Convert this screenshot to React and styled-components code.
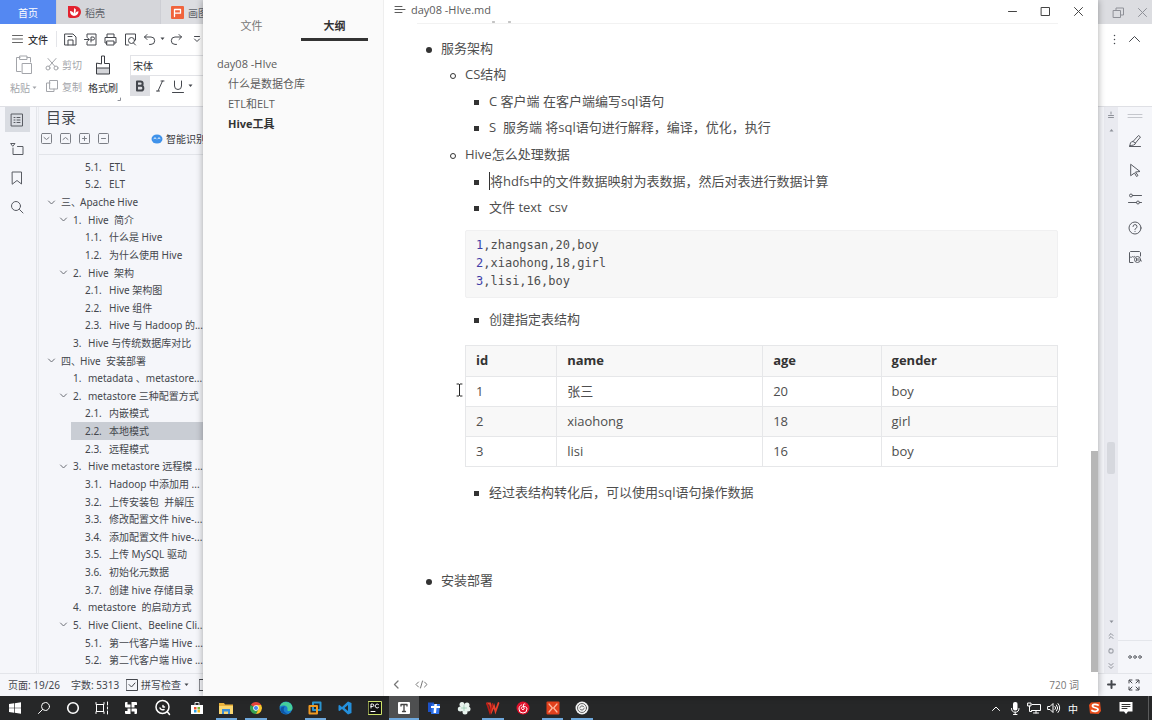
import React from "react";
import styled, { createGlobalStyle, css } from "styled-components";

const UI = `"Noto Sans", "Noto Sans CJK SC", sans-serif`;
const DOC = `"Open Sans", "Noto Sans CJK SC", sans-serif`;
const MONO = `"DejaVu Sans Mono", "Liberation Mono", monospace`;

const Global = createGlobalStyle`
  *, *::before, *::after { box-sizing: border-box; }
  body { margin: 0; overflow: hidden; font-family: ${UI}; font-size: 10px; color: #44474d; }
  button, select { font: inherit; color: inherit; background: none; border: 0; padding: 0; margin: 0; }
  a { color: inherit; text-decoration: none; }
  svg { display: block; flex: none; }
  ul { margin: 0; padding: 0; }
`;

const Desktop = styled.div`
  display: flex;
  flex-direction: column;
  height: 100vh;
`;
const Stage = styled.main`
  position: relative;
  flex: 1;
  min-height: 0;
  display: flex;
`;

/* generic line icon */
const Svg = styled.svg`
  fill: none;
  stroke: currentColor;
  stroke-width: ${(p) => p.$w || 1};
  stroke-linecap: round;
  stroke-linejoin: round;
`;
const Ico = ({ w = 16, h, sw, vb, children }) => (
  <Svg width={w} height={h || w} viewBox={vb || `0 0 ${w} ${h || w}`} $w={sw} aria-hidden="true">
    {children}
  </Svg>
);
const Tri = () => (
  <Ico w={5} h={4}>
    <path d="M.5 .5h4L2.5 3z" fill="currentColor" stroke="none" />
  </Ico>
);
const TriUp = () => (
  <Ico w={5} h={4}>
    <path d="M.5 3.5h4L2.5 1z" fill="currentColor" stroke="none" />
  </Ico>
);

/* ---------- word processor window ---------- */
const Wps = styled.section`
  flex: 1;
  min-width: 0;
  display: flex;
  flex-direction: column;
  background: #f5f6fa;
`;
const TabStrip = styled.div`
  display: flex;
  height: 24px;
  background: #dcdde1;
`;
const DocTab = styled.button`
  display: flex;
  align-items: center;
  justify-content: ${(p) => (p.$home ? "center" : "flex-start")};
  gap: 4px;
  width: ${(p) => (p.$home ? 57 : 104)}px;
  padding-left: ${(p) => (p.$home ? 0 : 10)}px;
  color: ${(p) => (p.$home ? "#fff" : "#5d6068")};
  background: ${(p) => (p.$home ? "#5488f2" : p.$dim ? "#d5d6da" : "#dcdde1")};
  border-right: 1px solid #cdced4;
`;
const WinButtons = styled.div`
  display: flex;
  align-items: center;
  gap: 12px;
  margin-left: auto;
  padding-right: 4px;
  color: #8f9198;
`;
const Ribbon = styled.div`
  display: flex;
  flex-direction: column;
  height: 83px;
  background: #fff;
  border-bottom: 1px solid #dfe0e5;
`;
const QuickBar = styled.div`
  display: flex;
  align-items: center;
  gap: 6px;
  height: 30px;
  padding: 0 11px;
`;
const FileMenu = styled.button`
  display: flex;
  align-items: center;
  gap: 4px;
  width: 46px;
  height: 16px;
  border-right: 1px solid #e4e5e9;
  font-weight: 500;
  color: #303238;
`;
const QuickButtons = styled.div`
  display: flex;
  align-items: center;
  gap: 5px;
`;
const IconButton = styled.button`
  display: flex;
  align-items: center;
  justify-content: center;
  gap: 4px;
`;
const Far = styled.div`
  display: flex;
  align-items: center;
  gap: 12px;
  margin-left: auto;
`;
const Tools = styled.div`
  display: flex;
  height: 42px;
  padding-left: 10px;
`;
const BigTool = styled.button`
  display: flex;
  flex-direction: column;
  align-items: center;
  justify-content: space-between;
  width: ${(p) => p.$w}px;
  line-height: 16px;
  color: ${(p) => (p.$off ? "#a3a5aa" : "#3a3c42")};
`;
const BigLabel = styled.span`
  display: flex;
  align-items: center;
  gap: 2px;
`;
const ToolPair = styled.div`
  display: flex;
  flex-direction: column;
  justify-content: space-between;
  width: 39px;
  margin: 0 4px 0 8px;
`;
const SmallTool = styled.button`
  display: flex;
  align-items: center;
  gap: 3px;
  height: 20px;
  color: #a3a5aa;
  white-space: nowrap;
`;
const FontGroup = styled.div`
  display: flex;
  flex-direction: column;
  justify-content: space-between;
  width: 150px;
  padding: 1px 0 0 12px;
`;
const FontSelect = styled.select`
  appearance: none;
  height: 21px;
  padding: 0 2px;
  border: 1px solid #e2e3e7;
  background: #fff;
  color: #303238;
`;
const FormatRow = styled.div`
  display: flex;
  align-items: center;
  height: 20px;
`;
const Format = styled.button`
  display: flex;
  align-items: center;
  justify-content: center;
  gap: 4px;
  width: ${(p) => p.$w || 20}px;
  height: 20px;
  background: ${(p) => (p.$on ? "#dddee2" : "none")};
`;
const Launcher = styled.div`
  padding-left: 116px;
  color: #8e9199;
`;
const Work = styled.div`
  display: flex;
  flex: 1;
  min-height: 0;
`;
const LeftRail = styled.nav`
  display: flex;
  flex-direction: column;
  align-items: center;
  gap: 4px;
  width: 37px;
  padding-right: 2px;
  border-right: 1px solid #e3e5ea;
`;
const RailButton = styled.button`
  display: flex;
  align-items: center;
  justify-content: center;
  width: 25px;
  height: 25px;
  color: #595c63;
  background: ${(p) => (p.$on ? "#d9dce2" : "none")};
`;
const Toc = styled.aside`
  display: flex;
  flex-direction: column;
  width: 200px;
  margin-left: 1px;
  border-left: 1px solid #e9ebef;
`;
const TocTitle = styled.h2`
  margin: 0;
  padding: 0 7px;
  height: 22px;
  font-size: 15px;
  line-height: 21px;
  font-weight: 400;
`;
const TocTools = styled.div`
  display: flex;
  align-items: center;
  gap: 8px;
  height: 26px;
  padding: 0 0 6px 2px;
  border-bottom: 1px solid #e2e4e9;
  color: #7c7f86;
`;
const Smart = styled.button`
  display: flex;
  align-items: center;
  gap: 3px;
  margin-left: 34px;
  color: #3a3c42;
  white-space: nowrap;
`;
const TocList = styled.nav`
  display: grid;
  grid-auto-rows: 1fr;
  flex: 1;
  min-height: 0;
  padding: 3px 0 4px;
`;
const TocRow = styled.a`
  display: flex;
  align-items: center;
  margin-left: ${(p) => 8 + p.$level * 12}px;
  line-height: 16px;
  white-space: pre;
  background: ${(p) => (p.$on ? "#c9cdd4" : "none")};
`;
const Twist = styled.span`
  display: flex;
  flex: none;
  width: 14px;
  color: #6b6e75;
`;
const Num = styled.span`
  flex: none;
  width: ${(p) => [19, 15, 24][p.$level]}px;
`;
const Page = styled.div`
  flex: 1;
`;
const ScrollRail = styled.div`
  display: flex;
  flex-direction: column;
  align-items: center;
  justify-content: space-between;
  width: 14px;
  padding: 4px 0;
  background: #e9eaf0;
  color: #8e9199;
`;
const ScrollCaps = styled.div`
  display: flex;
  flex-direction: column;
  align-items: center;
  gap: 9px;
`;
const Thumb = styled.div`
  width: 8px;
  height: 32px;
  margin-top: 164px;
  border-radius: 2px;
  background: #d6d8de;
`;
const RightRail = styled.nav`
  display: flex;
  flex-direction: column;
  align-items: center;
  gap: 4px;
  width: 34px;
  padding: 7px 0 4px;
`;
const Grip = styled.div`
  padding-bottom: 6px;
`;
const MoreSlot = styled.div`
  display: flex;
  justify-content: center;
  width: 100%;
  margin-top: auto;
  padding-top: 3px;
  border-top: 1px solid #e4e6eb;
`;
const StatusBar = styled.footer`
  display: flex;
  align-items: center;
  height: 23px;
  padding: 0 12px 1px 8px;
  border-top: 1px solid #e3e5ea;
`;
const StatusItem = styled.span`
  display: flex;
  align-items: center;
  gap: 3px;
  width: ${(p) => p.$w}px;
  white-space: nowrap;
`;

/* ---------- markdown editor window ---------- */
const Editor = styled.section`
  position: absolute;
  top: 0;
  bottom: 0;
  left: 203px;
  right: 54px;
  display: flex;
  background: #fff;
  font-family: ${DOC};
  box-shadow: 0 0 7px rgba(0, 0, 0, 0.35);
`;
const Outline = styled.aside`
  width: 181px;
  padding: 14px;
  background: #fafafa;
  border-right: 1px solid #eeeeee;
  font-size: 11px;
  color: #5c5c5c;
`;
const OutlineTabs = styled.div`
  display: flex;
  gap: 16px;
  padding-left: 1px;
`;
const OutlineTab = styled.button`
  width: 67px;
  height: 27px;
  padding-bottom: 3px;
  border-bottom: 3px solid ${(p) => (p.$on ? "#333" : "transparent")};
  color: ${(p) => (p.$on ? "#333" : "#777")};
  font-weight: ${(p) => (p.$on ? 700 : 400)};
`;
const OutlineList = styled.nav`
  display: flex;
  flex-direction: column;
  margin-top: 13px;
`;
const OutlineLink = styled.a`
  padding-left: ${(p) => (p.$top ? 0 : 11)}px;
  line-height: 20px;
  font-weight: ${(p) => (p.$bold ? 700 : 400)};
  color: ${(p) => (p.$bold ? "#333" : "#5c5c5c")};
`;
const Main = styled.div`
  display: flex;
  flex-direction: column;
  flex: 1;
  min-width: 0;
`;
const TitleBar = styled.header`
  display: flex;
  align-items: center;
  gap: 5px;
  height: 21px;
  padding: 0 14px 3px 10px;
  font-size: 11px;
  color: #5c5c5c;
`;
const TitleButtons = styled.div`
  display: flex;
  align-items: center;
  gap: 22px;
  margin-left: auto;
  padding-top: 4px;
  color: #444;
`;
const Pane = styled.div`
  display: flex;
  flex: 1;
  min-height: 0;
`;
const Article = styled.article`
  flex: 1;
  min-width: 0;
  padding: 0 33px;
  font-size: 13px;
  line-height: 26px;
  color: #4e4e4e;
`;
const Edge = styled.div`
  height: 3px;
  padding-left: 74px;
  border-bottom: 1px solid #f2f2f2;
  color: #888;
`;
const bullet = [
  css`border-radius: 50%; background: #333;`,
  css`border-radius: 50%; border: 1px solid #333;`,
  css`border: solid transparent; border-width: 0 1px 1px 0; background: #333 padding-box;`,
];
const List = styled.ul`
  padding-left: 24px;
  list-style: none;
  ${(p) => p.$depth === 0 && css`padding-top: 11px;`}
  ${(p) => p.$depth === 2 && css`margin: 1px 0;`}
  ${(p) => p.$roomy && css`margin-bottom: 62px;`}
  & > li::before {
    content: "";
    display: inline-block;
    width: 6px;
    height: 6px;
    margin: 0 9px 0 -15px;
    vertical-align: middle;
    ${(p) => bullet[p.$depth]}
  }
`;
const Caret = styled.span`
  border-left: 1px solid #333;
`;
const Code = styled.pre`
  margin: 10px 0 8px;
  padding: 5px 10px;
  border: 1px solid #f0f0f1;
  border-radius: 2px;
  background: #f7f7f7;
  font-family: ${MONO};
  font-size: 12px;
  line-height: 18px;
  height: 68px;
`;
const Key = styled.span`
  color: #3f3fa8;
`;
const TableWrap = styled.div`
  position: relative;
  margin: 13px 0 12px;
`;
const Pointer = styled.span`
  position: absolute;
  left: -10px;
  top: 38px;
  color: #222;
`;
const Table = styled.table`
  width: 100%;
  table-layout: fixed;
  border-collapse: collapse;
  line-height: 18px;
  text-align: left;
  th, td { height: 30px; padding: 0 10px 2px; border: 1px solid #e6e7e9; }
  th { height: 31px; color: #333; }
  thead tr, tbody tr:nth-child(2n) { background: #f8f8f8; }
`;
const PageScroll = styled.div`
  display: flex;
  flex-direction: column;
  justify-content: flex-end;
  width: 7px;
`;
const PageThumb = styled.div`
  height: 34%;
  background: #b7b7b7;
`;
const EditorFoot = styled.footer`
  display: flex;
  align-items: center;
  gap: 14px;
  height: 24px;
  padding: 0 19px 0 8px;
  color: #777;
`;
const Words = styled.span`
  margin-left: auto;
`;

/* ---------- taskbar ---------- */
const Taskbar = styled.nav`
  display: flex;
  height: 24px;
  background: #262728;
  color: #fff;
`;
const Launch = styled.button`
  display: flex;
  align-items: center;
  justify-content: center;
  width: ${(p) => p.$w || 29}px;
`;
const Apps = styled.div`
  display: grid;
  grid-template-columns: repeat(14, 1fr);
  width: 415px;
  margin-left: 1px;
`;
const AppButton = styled.button`
  display: flex;
  align-items: center;
  justify-content: center;
  background: ${(p) => (p.$front ? "#4e4f50" : "none")};
  position: relative;
  &::after {
    content: "";
    position: absolute;
    left: ${(p) => (p.$front ? 0 : 4)}px;
    right: ${(p) => (p.$front ? 0 : 4)}px;
    bottom: 0;
    height: 2px;
    background: ${(p) => (p.$run ? "#6ea8dc" : "none")};
  }
`;
const Tray = styled.div`
  display: flex;
  margin-left: auto;
  padding-right: 3px;
`;
const TrayEnd = styled.span`
  width: 4px;
  border-right: 1px solid #5a5b5c;
`;

const toc = [
  [2, "5.1.", "ETL"],
  [2, "5.2.", "ELT"],
  [0, "三、", "Apache Hive", 1],
  [1, "1.", "Hive  简介", 1],
  [2, "1.1.", "什么是 Hive"],
  [2, "1.2.", "为什么使用 Hive"],
  [1, "2.", "Hive  架构", 1],
  [2, "2.1.", "Hive 架构图"],
  [2, "2.2.", "Hive 组件"],
  [2, "2.3.", "Hive 与 Hadoop 的..."],
  [1, "3.", "Hive 与传统数据库对比"],
  [0, "四、", "Hive  安装部署", 1],
  [1, "1.", "metadata 、metastore..."],
  [1, "2.", "metastore 三种配置方式", 1],
  [2, "2.1.", "内嵌模式"],
  [2, "2.2.", "本地模式", 0, 1],
  [2, "2.3.", "远程模式"],
  [1, "3.", "Hive metastore 远程模 ...", 1],
  [2, "3.1.", "Hadoop 中添加用 ..."],
  [2, "3.2.", "上传安装包  并解压"],
  [2, "3.3.", "修改配置文件 hive-..."],
  [2, "3.4.", "添加配置文件 hive-..."],
  [2, "3.5.", "上传 MySQL 驱动"],
  [2, "3.6.", "初始化元数据"],
  [2, "3.7.", "创建 hive 存储目录"],
  [1, "4.", "metastore  的启动方式"],
  [1, "5.", "Hive Client、Beeline Cli...", 1],
  [2, "5.1.", "第一代客户端 Hive ..."],
  [2, "5.2.", "第二代客户端 Hive ..."],
];

const people = [
  ["1", "张三", "20", "boy"],
  ["2", "xiaohong", "18", "girl"],
  ["3", "lisi", "16", "boy"],
];

const boxed = ["M3 4.5l2.5 2 2.5-2", "M3 6.5l2.5-2 2.5 2", "M3.500 5.5h4M5.5 3.500v4", "M3.500 5.5h4"];

function WpsWindow() {
  return (
    <Wps>
      <TabStrip>
        <DocTab $home>首页</DocTab>
        <DocTab $dim>
          <Ico w={14}>
            <g stroke="none">
              <path d="M1 1h7a6 6 0 0 1 0 12H3a2 2 0 0 1-2-2z" fill="#e3222e" />
              <path d="M7 11C4 10.500 3 8.500 3 6c2 0 3.200 1 3.700 2.500L7.200 3l1.700 1.600-.7 3.900C9 7 10 6.300 11.500 6.200 11.300 9 10 10.700 7 11z" fill="#fff" />
            </g>
          </Ico>
          稻壳
        </DocTab>
        <DocTab>
          <Ico w={13}>
            <rect width="13" height="13" rx="1" fill="#f0633c" stroke="none" />
            <path d="M3.500 10.500v-7h6v3.700h-6" stroke="#fff" strokeWidth="1.300" />
          </Ico>
          画图
        </DocTab>
        <WinButtons>
          <IconButton aria-label="还原">
            <Ico w={13}>
              <path d="M1.500 4.500h7v7h-7zM4 4.500V2h7.500v7H8.500" />
            </Ico>
          </IconButton>
          <IconButton aria-label="关闭">
            <Ico w={11}>
              <path d="M1.500 1.500l8 8M9.500 1.500l-8 8" />
            </Ico>
          </IconButton>
        </WinButtons>
      </TabStrip>

      <Ribbon>
        <QuickBar>
          <FileMenu>
            <Ico w={13} h={10}>
              <path d="M1.500 1.500h10M1.500 5h10M1.500 8.500h10" stroke="#666" />
            </Ico>
            文件
          </FileMenu>
          <QuickButtons>
            <IconButton aria-label="保存">
              <Ico w={15}>
                <path d="M2 2h8l3 3v8H2zM5 13V8h5v5M5 4.500h4" />
              </Ico>
            </IconButton>
            <IconButton aria-label="导出">
              <Ico w={15}>
                <path d="M4 5V2h9v11H4v-3M1.500 7.500H6M4.500 5.800L6.300 7.500 4.500 9.200M8 10V5h2a1.500 1.500 0 0 1 0 3H8" />
              </Ico>
            </IconButton>
            <IconButton aria-label="打印">
              <Ico w={15}>
                <path d="M4 5.500V2h7v3.500M4 11H2V5.500h11V11h-2M4 9h7v4H4z" />
              </Ico>
            </IconButton>
            <IconButton aria-label="打印预览">
              <Ico w={15}>
                <path d="M5.500 13H2.500V2h10v6M10.500 11L12.500 13" />
                <circle cx="8.500" cy="8.500" r="3" />
              </Ico>
            </IconButton>
            <IconButton aria-label="撤销">
              <Ico w={13}>
                <path d="M4 1.500L1.500 4 4 6.500M1.500 4h6.500a3.700 3.700 0 0 1 0 7.400H6.500" />
              </Ico>
              <Tri />
            </IconButton>
            <IconButton aria-label="重做">
              <Ico w={13}>
                <path d="M9 1.500L11.500 4 9 6.500M11.500 4H5a3.700 3.700 0 0 0 0 7.400h1.500" />
              </Ico>
            </IconButton>
            <IconButton aria-label="更多">
              <Ico w={14} h={8}>
                <path d="M6.500 1.500h5M6.500 4l2.500 2.500L11.500 4" />
              </Ico>
            </IconButton>
          </QuickButtons>
          <Far>
            <IconButton aria-label="选项">
              <Ico w={3} h={11}>
                <path d="M1.500 1.500v.1M1.500 5.500v.1M1.500 9.500v.1" strokeWidth="1.500" />
              </Ico>
            </IconButton>
            <IconButton aria-label="收起功能区">
              <Ico w={13} h={8}>
                <path d="M1.500 6.500l5-5 5 5" />
              </Ico>
            </IconButton>
          </Far>
        </QuickBar>
        <Tools>
          <BigTool $w={27} $off>
            <Ico w={20} h={22}>
              <path d="M7 17.500H2.500v-14H6M13 3.500h3.500V8M6 2h7v3.500H6zM8.500 9.500h9v10h-9z" />
            </Ico>
            <BigLabel>
              粘贴 <Tri />
            </BigLabel>
          </BigTool>
          <ToolPair>
            <SmallTool>
              <Ico w={14}>
                <circle cx="3" cy="11" r="2" />
                <circle cx="11" cy="11" r="2" />
                <path d="M4 9.500L11 1.500M10 9.500L3 1.500" />
              </Ico>
              剪切
            </SmallTool>
            <SmallTool>
              <Ico w={14}>
                <path d="M5 1.500h7.500V10H5zM5 4H1.500v8.500H9V10" />
              </Ico>
              复制
            </SmallTool>
          </ToolPair>
          <BigTool $w={30}>
            <Ico w={20} h={22}>
              <path d="M3.500 14h13v6h-13z" fill="#d4d5d9" stroke="none" />
              <path d="M8.500 9.500V2h3v7.500h5v10.500h-13V9.500zM3.500 14h13" />
            </Ico>
            <BigLabel>格式刷</BigLabel>
          </BigTool>
          <FontGroup>
            <FontSelect aria-label="字体" defaultValue="宋体">
              <option>宋体</option>
            </FontSelect>
            <FormatRow>
              <Format $on aria-label="加粗">
                <Ico w={12} sw={2}>
                  <path d="M3 1.500h3.500a2 2 0 0 1 0 4.300H3zM3 5.800h4a2.300 2.300 0 0 1 0 4.700H3z" />
                </Ico>
              </Format>
              <Format aria-label="倾斜">
                <Ico w={12}>
                  <path d="M7 1h3M2.500 11h3M8.500 1L4 11" />
                </Ico>
              </Format>
              <Format $w={24} aria-label="下划线">
                <Ico w={12} h={13}>
                  <path d="M2.500 1v5a3.500 3.500 0 0 0 7 0V1M.5 12.500h11" />
                </Ico>
                <Tri />
              </Format>
            </FormatRow>
          </FontGroup>
        </Tools>
        <Launcher>
          <Ico w={6}>
            <path d="M4.500 2v2.500H2" />
          </Ico>
        </Launcher>
      </Ribbon>

      <Work>
        <LeftRail>
          <RailButton $on aria-label="目录">
            <Ico w={14}>
              <rect x="1.500" y="1" width="11" height="12" />
              <path d="M4 4.500h1M7 4.500h3M4 7h1M7 7h3M4 9.500h1M7 9.500h3" />
            </Ico>
          </RailButton>
          <RailButton aria-label="章节">
            <Ico w={14}>
              <path d="M1 1.500h4L3 4zM3 6v6.500h10v-8H7.500" />
            </Ico>
          </RailButton>
          <RailButton aria-label="书签">
            <Ico w={12} h={14}>
              <path d="M1.500 1h9v12L6 9.500 1.500 13z" />
            </Ico>
          </RailButton>
          <RailButton aria-label="查找">
            <Ico w={14}>
              <circle cx="6" cy="6" r="4.500" />
              <path d="M9.500 9.500L13 13" />
            </Ico>
          </RailButton>
        </LeftRail>
        <Toc>
          <TocTitle>目录</TocTitle>
          <TocTools>
            {boxed.map((d) => (
              <IconButton key={d} aria-label="目录层级">
                <Ico w={11}>
                  <rect x=".5" y=".5" width="10" height="10" rx="1" />
                  <path d={d} />
                </Ico>
              </IconButton>
            ))}
            <Smart>
              <Ico w={12} h={10}>
                <ellipse cx="6" cy="5" rx="5.500" ry="4.500" fill="#3f92ea" stroke="none" />
                <path d="M3 4.500l1-.7 1 .7M7 4.500l1-.7 1 .7" stroke="#fff" />
              </Ico>
              智能识别
            </Smart>
          </TocTools>
          <TocList>
            {toc.map(([level, num, text, open, on]) => (
              <TocRow key={num + text} href="#" $level={level} $on={on}>
                <Twist>
                  {open ? (
                    <Ico w={9} h={7}>
                      <path d="M1.500 2l3 3 3-3" />
                    </Ico>
                  ) : null}
                </Twist>
                <Num $level={level}>{num}</Num>
                {text}
              </TocRow>
            ))}
          </TocList>
        </Toc>
        <Page />
        <ScrollRail>
          <ScrollCaps>
            <Ico w={8} h={8}>
              <path d="M4 1v2M1.500 4.500h5M1.500 6.500h5" />
            </Ico>
            <TriUp />
          </ScrollCaps>
          <Thumb />
          <ScrollCaps>
            <Tri />
            <Ico w={6}>
              <path d="M1 2.500l2-2 2 2M1 5.500l2-2 2 2" />
            </Ico>
            <Ico w={6}>
              <rect x="1" y="1" width="4" height="4" rx="1" />
            </Ico>
            <Ico w={6}>
              <path d="M1 .5l2 2 2-2M1 3.500l2 2 2-2" />
            </Ico>
          </ScrollCaps>
        </ScrollRail>
        <RightRail>
          <Grip>
            <Ico w={16} h={4}>
              <path d="M1 .5h14M1 3.500h14" stroke="#c5c7cd" />
            </Ico>
          </Grip>
          <RailButton aria-label="编辑">
            <Ico w={14}>
              <path d="M1.500 12.500h11M2 11.500c0-2 .5-4 3-4l5.500-6 2 1.500-5 6c0 2-3 2.500-5.500 2.500zM5 7.500L7.500 9" />
            </Ico>
          </RailButton>
          <RailButton aria-label="选择">
            <Ico w={14}>
              <path d="M3 1.500l9 7-4.500.5 2.500 3.500-1.500 1L6.500 10 3 12.500z" />
            </Ico>
          </RailButton>
          <RailButton aria-label="设置">
            <Ico w={14}>
              <circle cx="3" cy="3.500" r="1.500" />
              <circle cx="10" cy="10.500" r="1.500" />
              <path d="M4.500 3.500h9M.5 10.500h8M11.500 10.500h2" />
            </Ico>
          </RailButton>
          <RailButton aria-label="帮助">
            <Ico w={14}>
              <circle cx="7" cy="7" r="6" />
              <path d="M5 5.500a2 2 0 1 1 2.500 2c-.5.300-.5.500-.5 1M7 10.300v.2" />
            </Ico>
          </RailButton>
          <RailButton aria-label="图片">
            <Ico w={14}>
              <path d="M5 12.500H1.500v-10l1-1h9l1 1V6M1.500 6.500c2 2 3 0 3 0s.5 1.500 2 0" />
              <circle cx="9.500" cy="9.500" r="3" />
              <path d="M8.500 8.500v2M10 8.500v2M12 10l1.500 1" />
            </Ico>
          </RailButton>
          <MoreSlot>
            <RailButton aria-label="更多工具">
              <Ico w={14} h={4}>
                <circle cx="2" cy="2" r="1.300" />
                <circle cx="7" cy="2" r="1.300" />
                <circle cx="12" cy="2" r="1.300" />
              </Ico>
            </RailButton>
          </MoreSlot>
        </RightRail>
      </Work>

      <StatusBar>
        <StatusItem $w={63}>页面: 19/26</StatusItem>
        <StatusItem $w={55}>字数: 5313</StatusItem>
        <StatusItem $w={73}>
          <Ico w={12}>
            <path d="M.5 .5h11v11H.5zM3 5.500L5.500 8 9 4" />
          </Ico>
          拼写检查 <Tri />
        </StatusItem>
        <Ico w={12}>
          <path d="M.5 .5h11v11H.5z" />
        </Ico>
        <Far>
          <IconButton aria-label="放大">
            <Ico w={9} sw={2}>
              <path d="M4.500 1v7M1 4.500h7" />
            </Ico>
          </IconButton>
          <IconButton aria-label="全屏">
            <Ico w={12}>
              <path d="M1 4V1h3M8 1h3v3M11 8v3H8M4 11H1V8M1.500 1.500L4 4M10.500 1.500L8 4M10.500 10.500L8 8M1.500 10.500L4 8" />
            </Ico>
          </IconButton>
        </Far>
      </StatusBar>
    </Wps>
  );
}

function EditorWindow() {
  return (
    <Editor>
      <Outline>
        <OutlineTabs>
          <OutlineTab>文件</OutlineTab>
          <OutlineTab $on>大纲</OutlineTab>
        </OutlineTabs>
        <OutlineList>
          <OutlineLink href="#" $top>day08 -HIve</OutlineLink>
          <OutlineLink href="#">什么是数据仓库</OutlineLink>
          <OutlineLink href="#">ETL和ELT</OutlineLink>
          <OutlineLink href="#" $bold>Hive工具</OutlineLink>
        </OutlineList>
      </Outline>
      <Main>
        <TitleBar>
          <Ico w={12} h={9}>
            <path d="M1 1.500h7M1 4.500h10M1 7.500h7" />
          </Ico>
          day08 -HIve.md
          <TitleButtons>
            <IconButton aria-label="最小化">
              <Ico w={11}>
                <path d="M1.500 5.500h8" />
              </Ico>
            </IconButton>
            <IconButton aria-label="最大化">
              <Ico w={11}>
                <path d="M1.500 1.500h8v8h-8z" />
              </Ico>
            </IconButton>
            <IconButton aria-label="关闭">
              <Ico w={11}>
                <path d="M1.500 1.500l8 8M9.500 1.500l-8 8" />
              </Ico>
            </IconButton>
          </TitleButtons>
        </TitleBar>
        <Pane>
          <Article>
            <Edge>
              <Ico w={22} h={2}>
                <path d="M1.500 1h2M17.500 1h2" />
              </Ico>
            </Edge>
            <List $depth={0}>
              <li>
                服务架构
                <List $depth={1} $roomy>
                  <li>
                    CS结构
                    <List $depth={2}>
                      <li>C 客户端 在客户端编写sql语句</li>
                      <li>S&nbsp; 服务端 将sql语句进行解释，编译，优化，执行</li>
                    </List>
                  </li>
                  <li>
                    Hive怎么处理数据
                    <List $depth={2}>
                      <li>
                        <Caret />
                        将hdfs中的文件数据映射为表数据，然后对表进行数据计算
                      </li>
                      <li>文件 text&nbsp; csv</li>
                    </List>
                    <Code>
                      <Key>1</Key>,zhangsan,20,boy{"\n"}
                      <Key>2</Key>,xiaohong,18,girl{"\n"}
                      <Key>3</Key>,lisi,16,boy
                    </Code>
                    <List $depth={2}>
                      <li>创建指定表结构</li>
                    </List>
                    <TableWrap>
                      <Pointer>
                        <Ico w={9} h={14}>
                          <path d="M2 1h2l.5.500L5 1h2M4.500 1.500v11M2 13h2l.5-.5.5.5h2" />
                        </Ico>
                      </Pointer>
                      <Table>
                        <colgroup>
                          <col style={{ width: "15.4%" }} />
                          <col style={{ width: "34.8%" }} />
                          <col style={{ width: "20%" }} />
                          <col />
                        </colgroup>
                        <thead>
                          <tr>
                            <th>id</th>
                            <th>name</th>
                            <th>age</th>
                            <th>gender</th>
                          </tr>
                        </thead>
                        <tbody>
                          {people.map((row) => (
                            <tr key={row[0]}>
                              {row.map((cell) => (
                                <td key={cell}>{cell}</td>
                              ))}
                            </tr>
                          ))}
                        </tbody>
                      </Table>
                    </TableWrap>
                    <List $depth={2}>
                      <li>经过表结构转化后，可以使用sql语句操作数据</li>
                    </List>
                  </li>
                </List>
              </li>
              <li>安装部署</li>
            </List>
          </Article>
          <PageScroll>
            <PageThumb />
          </PageScroll>
        </Pane>
        <EditorFoot>
          <IconButton aria-label="隐藏侧栏">
            <Ico w={9} sw={1.3}>
              <path d="M6 1L2.500 4.500 6 8" />
            </Ico>
          </IconButton>
          <IconButton aria-label="源代码模式">
            <Ico w={13} h={9}>
              <path d="M3.500 2L1 4.500 3.500 7M9.500 2L12 4.500 9.500 7M7.500 1l-2 7" />
            </Ico>
          </IconButton>
          <Words>720 词</Words>
        </EditorFoot>
      </Main>
    </Editor>
  );
}

const apps = [
  ["应用商店", 0, (
    <>
      <path d="M1 4h12v9H1z" fill="#fff" stroke="none" />
      <path d="M5 4V1.500h4V4" stroke="#ddd" />
      <path d="M4 6h2.500v2.500H4z" fill="#e8502e" stroke="none" />
      <path d="M7.500 6H10v2.500H7.500z" fill="#7cb82f" stroke="none" />
      <path d="M4 9h2.500v2.500H4z" fill="#2ba0e5" stroke="none" />
      <path d="M7.500 9H10v2.500H7.500z" fill="#f5b81c" stroke="none" />
    </>
  )],
  ["资源管理器", 1, (
    <g stroke="none">
      <path d="M0 2h5l1 1.500h8V12H0z" fill="#e9b23c" />
      <path d="M0 5h14v8H0z" fill="#fbd771" />
      <path d="M3 8h8v5H9v-2.500H5V13H3z" fill="#3f8fd6" />
    </g>
  )],
  ["浏览器", 1, (
    <g stroke="none">
      <path d="M7 7L1.800 4a6 6 0 0 1 10.400 0z" fill="#e5443a" />
      <path d="M7 7h-1L1.800 4A6 6 0 0 0 7 13l2-4z" fill="#36a352" />
      <path d="M7 4h5.200A6 6 0 0 1 7 13l2.500-5z" fill="#f8c62c" />
      <circle cx="7" cy="7" r="2.800" fill="#fff" />
      <circle cx="7" cy="7" r="2.100" fill="#4a87ee" />
    </g>
  )],
  ["Edge", 0, (
    <g stroke="none">
      <circle cx="7" cy="7" r="6.500" fill="#1b7fd0" />
      <path d="M.7 6A6.500 6.500 0 0 1 13.500 7c0 2-1.500 3-3.500 3-1.500 0-2-.7-1.500-1.500C9 6 7 4.500 4.500 4.500 3 4.500 1.500 5 .7 6z" fill="#45cf9a" />
      <path d="M5 7c-1 2.500.5 5 4 5.500-4 1.500-7.500-1-7.500-4C1.500 6 4 5 6 5.500 5.500 6 5 6.500 5 7z" fill="#0d55a5" />
    </g>
  )],
  ["虚拟机", 1, (
    <g strokeWidth="2">
      <path d="M5 1.500h7.500V9H5z" stroke="#2b95cf" />
      <path d="M1.500 5H9v7.500H1.500z" stroke="#f09a22" />
    </g>
  )],
  ["代码编辑器", 0, (
    <g stroke="none">
      <path d="M10 .5L13.500 2v10L10 13.500 4 8 1.500 10 .5 9.500v-5L1.500 4 4 6zM10 4L6.500 7 10 10z" fill="#2490dc" fillRule="evenodd" />
    </g>
  )],
  ["PyCharm", 0, (
    <>
      <rect x=".5" y=".5" width="13" height="13" fill="#111" stroke="#cfe36a" />
      <path d="M3 7V3h1.500a1.200 1.200 0 0 1 0 2.500H3M10.500 3.500a2 2 0 1 0 0 3M3 10.500h4" stroke="#fff" />
    </>
  )],
  ["文档编辑器", 2, (
    <>
      <rect x="1" y="1" width="12" height="12" rx="1" fill="#fff" stroke="none" />
      <path d="M4 5V3.500h6V5M7 3.500v7M5.500 10.500h3" stroke="#444" strokeWidth="1.300" />
    </>
  )],
  ["翻译", 0, (
    <g stroke="none">
      <path d="M1 1.500h6V9L5 11H1z" fill="#1c52c9" />
      <path d="M5 3h8l-1 10H4z" fill="#2f74ee" />
      <path d="M7.500 3h2.500l-.3 2H13v2H9.500L9 12H6.500L7 7H4V5h3.200z" fill="#fff" />
    </g>
  )],
  ["设置工具", 0, (
    <g stroke="none" fill="#e8f3ee">
      <circle cx="5" cy="3.500" r="2.500" />
      <circle cx="10" cy="4" r="2.500" />
      <circle cx="11" cy="8" r="2.500" />
      <circle cx="8" cy="11" r="2.500" />
      <circle cx="3.300" cy="8" r="2.500" />
      <circle cx="7" cy="7" r="3.500" />
      <path d="M7 4.500v5M4.500 7h5" stroke="#7fbfa0" strokeWidth=".6" />
    </g>
  )],
  ["WPS", 1, (
    <g strokeWidth="1.800" strokeLinejoin="miter">
      <path d="M1 2.500h3l1.500 8L8 5l1.500 5.500L12.500 2" stroke="#e8402c" />
      <path d="M1 2.500L4 11.500 6.500 3" stroke="#b91d17" />
    </g>
  )],
  ["音乐", 0, (
    <>
      <circle cx="7" cy="7" r="6.500" fill="#e0112b" stroke="none" />
      <path d="M9 3c-1.500-.5-2 .5-1.500 2l.7 3a1.500 1.500 0 1 1-2.500-1.700C7 5 11 5 11 8a4 4 0 0 1-8 0c0-2 1-3.300 2.500-4" stroke="#fff" />
    </>
  )],
  ["思维导图", 1, (
    <>
      <rect x=".5" y=".5" width="13" height="13" rx="1" fill="#e2401c" stroke="none" />
      <path d="M3 3l3 3.500v1L3 11M11 3L8 6.500v1L11 11M6 7h2" stroke="#ffb9a0" strokeWidth="1.200" />
    </>
  )],
  ["录屏", 1, (
    <>
      <circle cx="7" cy="7" r="6.500" fill="#f3f3f3" stroke="none" />
      <circle cx="7" cy="7" r="4.500" stroke="#444" strokeWidth=".8" />
      <path d="M5 6.500a2.200 2.200 0 0 1 4-.5M9 7.500a2.200 2.200 0 0 1-4 .5" stroke="#444" strokeWidth=".8" />
    </>
  )],
];

function Bar() {
  return (
    <Taskbar>
      <Launch aria-label="开始">
        <Ico w={14}>
          <path d="M1 3l5-.7v4.400H1zM6.700 2.200L13 1.300v5.400H6.700zM1 7.300h5v4.400L1 11zM6.700 7.300H13v5.400l-6.300-.9z" fill="#fff" stroke="none" />
        </Ico>
      </Launch>
      <Launch aria-label="搜索">
        <Ico w={14}>
          <circle cx="8.500" cy="5.500" r="4" />
          <path d="M5.500 8.500L1.500 12.500" />
        </Ico>
      </Launch>
      <Launch aria-label="助手">
        <Ico w={14} sw={1.6}>
          <circle cx="7" cy="7" r="5.300" />
        </Ico>
      </Launch>
      <Launch aria-label="任务视图">
        <Ico w={14}>
          <path d="M1 1.500v2h8v-2M1 12.500v-2h8v2M1.500 4v6M8.500 4v6M12.500 1v3M12.500 6v2M12.500 10v3" />
        </Ico>
      </Launch>
      <Launch aria-label="工具箱">
        <Ico w={14}>
          <g fill="#fff" stroke="none">
            <path d="M1 2a1 1 0 0 1 1-1h1.500v2.500H6.500V6.500H2a1 1 0 0 1-1-1z" />
            <path d="M7.500 1H12a1 1 0 0 1 1 1v2h-2.500v2.500h-3z" />
            <path d="M7.500 7.500H12a1 1 0 0 1 1 1V12a1 1 0 0 1-1 1h-1.500v-2.500h-3z" />
            <path d="M1 10h2.500V7.500h3V13H2a1 1 0 0 1-1-1z" />
          </g>
        </Ico>
      </Launch>
      <Launch $w={36} aria-label="查找文件">
        <Ico w={18} sw={1.5}>
          <circle cx="8.500" cy="8" r="6.500" />
          <path d="M13.500 13L15.500 15.500" />
          <path d="M9 6.500v1.500h1.500M6 9a3 3 0 0 0 4 1.500" />
        </Ico>
      </Launch>
      <Apps>
        {apps.map(([name, state, art]) => (
          <AppButton key={name} aria-label={name} $run={state > 0} $front={state === 2}>
            <Ico w={14}>{art}</Ico>
          </AppButton>
        ))}
      </Apps>
      <Tray>
        <Launch $w={20} aria-label="隐藏的图标">
          <Ico w={10} h={7}>
            <path d="M1.500 5.500L5 2l3.500 3.500" />
          </Ico>
        </Launch>
        <Launch $w={18} aria-label="麦克风">
          <Ico w={10} h={13}>
            <rect x="3" y="0" width="4.500" height="8.500" rx="2" fill="#fff" stroke="none" />
            <path d="M1.500 6.500a3.700 3.700 0 0 0 7.500 0M5.200 10v2M3.500 12.500h3.500" />
          </Ico>
        </Launch>
        <Launch $w={20} aria-label="网络">
          <Ico w={14} h={12}>
            <path d="M5 2.500h8.500v6H4.500M9 8.500v2.500M6.500 11h5M1 1h3v3H1zM2.500 4v5.500h2" />
          </Ico>
        </Launch>
        <Launch $w={19} aria-label="音量">
          <Ico w={14} h={12}>
            <path d="M1 4.500h2l3-3v9l-3-3H1zM8 4.500a2 2 0 0 1 0 3M9.500 3a4.500 4.500 0 0 1 0 6M11 1.500a6.500 6.500 0 0 1 0 9" />
          </Ico>
        </Launch>
        <Launch $w={20}>中</Launch>
        <Launch $w={24} aria-label="输入法">
          <Ico w={14}>
            <path d="M3 1.500l9-.5 1 9-2.500 3L2 12.500 1 4z" fill="#ea4e1c" stroke="none" />
            <path d="M10 4C8 3 4.500 3 4.500 5s5.500 1.500 5.500 3.500S6 11 4 9.500" stroke="#fff" strokeWidth="1.800" />
          </Ico>
        </Launch>
        <Launch $w={38} aria-label="通知">
          <Ico w={14}>
            <path d="M.5 1h13v9.500H9L7 13l-2-2.500H.5z" fill="#fff" stroke="none" />
            <path d="M3 3.500h8M3 5.500h8M3 7.500h5" stroke="#333" />
          </Ico>
        </Launch>
        <TrayEnd />
      </Tray>
    </Taskbar>
  );
}

export default function App() {
  return (
    <>
      <Global />
      <Desktop>
        <Stage>
          <WpsWindow />
          <EditorWindow />
        </Stage>
        <Bar />
      </Desktop>
    </>
  );
}
